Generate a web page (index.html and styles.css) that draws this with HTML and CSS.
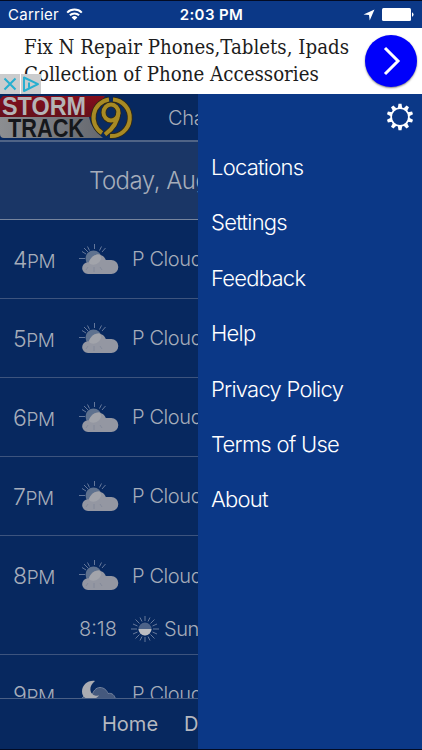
FILE: index.html
```html
<!DOCTYPE html>
<html lang="en">
<head>
  <meta charset="utf-8">
  <title>Storm Track 9</title>
  <link rel="stylesheet" href="styles.css">
</head>
<body>
  <!-- shared weather icons -->
  <svg class="symbols" aria-hidden="true">
    <symbol id="partly-cloudy" viewBox="0 0 40 31">
      <g stroke="#64779a" stroke-width="1">
        <path d="M15.500 0v5M8.500 2.500l2 4M22.500 2.500l-2 4M3 7.500l4 2.500M26.500 4l-3.500 4M0 14.500h6M5 4l4 4"/>
      </g>
      <circle cx="14.500" cy="14.500" r="8" fill="#5f728f"/>
      <path d="M9 30a5.800 5.800 0 0 1 0-11.700h1C11.500 13.500 15 10.500 19 10.500c3.800 0 6.500 2.300 7.800 5.500h5.500a7 7 0 0 1 0 14z" fill="#9497a2"/>
      <path d="M11 20a8 8 0 0 0 11-5a8 8 0 0 0-1.500-4.500C16 10 12 13 10 18z" fill="#a2a4ab"/>
      <path d="M15 23v5M9 23l-2 3M21 23l2 3" stroke="#7f8798" stroke-width=".8"/>
    </symbol>
  </svg>

  <header class="status-bar">
    <div class="carrier">
      <span>Carrier</span>
      <svg width="17" height="13" viewBox="0 0 17 13">
        <path d="M1.200 4.600a10.300 10.300 0 0 1 14.600 0M3.900 7.300a6.500 6.500 0 0 1 9.200 0" fill="none" stroke="#fff" stroke-width="2"/>
        <path d="M8.500 12.300L5.600 9.400a4.100 4.100 0 0 1 5.800 0z" fill="#fff"/>
      </svg>
    </div>
    <div class="clock">2:03 PM</div>
    <div class="indicators">
      <svg width="12" height="12" viewBox="0 0 12 12"><path d="M11.500.500L6.700 11.500L6 6L.500 5.500z" fill="#fff"/></svg>
      <svg width="33" height="13" viewBox="0 0 33 13"><rect width="29" height="13" rx="1.500" fill="#fff"/><path d="M30 4.200a2.500 2.500 0 0 1 0 4.600z" fill="#fff"/></svg>
    </div>
  </header>

  <section class="ad">
    <p class="ad-text">Fix N Repair Phones,Tablets, Ipads<br>Collection of Phone Accessories</p>
    <div class="ad-button">
      <svg width="18" height="30" viewBox="0 0 18 30"><path d="M2 2l13 13L2 28" fill="none" stroke="#fff" stroke-width="3"/></svg>
    </div>
    <div class="ad-badges">
      <svg width="20" height="20" viewBox="0 0 20 20"><path d="M4.500 4.500l11 11M15.500 4.500l-11 11" stroke="#27afd0" stroke-width="2"/></svg>
      <svg width="20" height="20" viewBox="0 0 20 20"><path d="M3 3.500v13.500L17 10.200zM8 8.500v5M8 5.500v1.500" fill="none" stroke="#27afd0" stroke-width="2" stroke-linejoin="round"/></svg>
    </div>
  </section>

  <main class="app">
    <div class="forecast">
      <div class="top-bar">
        <svg class="logo" width="133" height="46" viewBox="0 0 133 46">
          <defs>
            <linearGradient id="red" x2="0" y2="1"><stop offset="0" stop-color="#840e1c"/><stop offset="1" stop-color="#65101b"/></linearGradient>
            <linearGradient id="grey" x2="1"><stop offset="0" stop-color="#8c8e91"/><stop offset="1" stop-color="#65686f"/></linearGradient>
          </defs>
          <path d="M3 2h102l-14 21H0V5z" fill="url(#red)"/>
          <path d="M0 23h89q2 12 14 21H4q-4 0-4-4z" fill="url(#grey)"/>
          <circle cx="111" cy="23.500" r="20" fill="#0a2a60"/>
          <text x="2" y="21" class="logo-storm" textLength="84" lengthAdjust="spacingAndGlyphs">STORM</text>
          <text x="8" y="42.500" class="logo-track" textLength="76" lengthAdjust="spacingAndGlyphs">TRACK</text>
          <g fill="none" stroke="#332a12" stroke-width="5.600">
            <path d="M109 5.500a18.300 18.300 0 0 0-7 33.500"/>
            <path d="M113 5.500a18.300 18.300 0 0 1-3 36.500"/>
            <ellipse cx="111" cy="18.500" rx="7.500" ry="8"/>
            <path d="M118.500 18.500q-1 13-13.500 22"/>
          </g>
          <g fill="none" stroke="#a88a24" stroke-width="4">
            <path d="M109 5.500a18.300 18.300 0 0 0-7 33.500"/>
            <path d="M113 5.500a18.300 18.300 0 0 1-3 36.500"/>
            <ellipse cx="111" cy="18.500" rx="7.500" ry="8"/>
            <path d="M118.500 18.500q-1 13-13.500 22"/>
          </g>
        </svg>
        <span class="location">Charlotte</span>
      </div>
      <div class="day">Today, August</div>
      <div class="hours">
        <div class="hour">
          <div class="time">4<small>PM</small></div>
          <svg class="icon"><use href="#partly-cloudy"/></svg>
          <div class="sky">P Cloudy</div>
        </div>
        <div class="hour">
          <div class="time">5<small>PM</small></div>
          <svg class="icon"><use href="#partly-cloudy"/></svg>
          <div class="sky">P Cloudy</div>
        </div>
        <div class="hour">
          <div class="time">6<small>PM</small></div>
          <svg class="icon"><use href="#partly-cloudy"/></svg>
          <div class="sky">P Cloudy</div>
        </div>
        <div class="hour">
          <div class="time">7<small>PM</small></div>
          <svg class="icon"><use href="#partly-cloudy"/></svg>
          <div class="sky">P Cloudy</div>
        </div>
        <div class="hour with-event">
          <div class="time">8<small>PM</small></div>
          <svg class="icon"><use href="#partly-cloudy"/></svg>
          <div class="sky">P Cloudy</div>
        </div>
        <div class="event">
          <div class="event-time">8:18</div>
          <svg width="28" height="26" viewBox="0 0 28 26">
            <path d="M14 0v5M14 21v5M0 13h6M22 13h6M4.500 3.500l4 4M23.500 3.500l-4 4M4.500 22.500l4-4M23.500 22.500l-4-4M9 1.500l2 4M19 1.500l-2 4M9 24.500l2-4M19 24.500l-2-4M2 8l4.500 2M26 8l-4.500 2M2 18l4.500-2M26 18l-4.500-2" stroke="#66789a" stroke-width="1"/>
            <circle cx="14" cy="13" r="6.500" fill="#4c6288"/>
            <path d="M7.500 13h13a6.500 6.500 0 0 1-13 0z" fill="#bcbdc1"/>
          </svg>
          <div class="event-name">Sunset</div>
        </div>
        <div class="hour">
          <div class="time">9<small>PM</small></div>
          <svg class="icon" viewBox="0 0 40 31">
            <path d="M8 28a6 6 0 0 1-3-11l8 0C14 12 17 8.500 21 8.500c4 0 7 3 8 6c4-1 7 2 7.500 6V28z" fill="#45597e" stroke="#71809c" stroke-width="1"/>
            <path d="M16 2C9 1 3 6 3 12.500S9 21 14 20c3-.500 5-2 6-3.500C11 18 8 8 16 2z" fill="#abacb2"/>
          </svg>
          <div class="sky">P Cloudy</div>
        </div>
      </div>
      <nav class="tabs">
        <span>Home</span>
        <span>Daily</span>
      </nav>
    </div>

    <aside class="drawer">
      <svg class="gear" width="28" height="28" viewBox="0 0 28 28">
        <circle cx="14" cy="14" r="8.900" fill="none" stroke="#fff" stroke-width="1.800"/>
        <g fill="#fff">
          <path id="tooth" d="M11.800 5l.7-4.200h3l.7 4.200z"/>
          <use href="#tooth" transform="rotate(36 14 14)"/>
          <use href="#tooth" transform="rotate(72 14 14)"/>
          <use href="#tooth" transform="rotate(108 14 14)"/>
          <use href="#tooth" transform="rotate(144 14 14)"/>
          <use href="#tooth" transform="rotate(180 14 14)"/>
          <use href="#tooth" transform="rotate(216 14 14)"/>
          <use href="#tooth" transform="rotate(252 14 14)"/>
          <use href="#tooth" transform="rotate(288 14 14)"/>
          <use href="#tooth" transform="rotate(324 14 14)"/>
        </g>
      </svg>
      <ul class="menu">
        <li>Locations</li>
        <li>Settings</li>
        <li>Feedback</li>
        <li>Help</li>
        <li>Privacy Policy</li>
        <li>Terms of Use</li>
        <li>About</li>
      </ul>
    </aside>
  </main>
</body>
</html>
```

FILE: styles.css
```css
/* basic layout */
* {
  box-sizing: border-box;
}

body {
  display: flex;
  flex-direction: column;
  width: 422px;
  height: 750px;
  margin: 0;
  overflow: hidden;
  background: #0b3887;
  border-top: 1px solid #020b24;
  border-bottom: 1px solid #020b24;
  font-family: Inter, "Liberation Sans", sans-serif;
  font-weight: 300;
  color: #fff;
}

svg {
  display: block;
  flex: none;
}

.symbols {
  position: absolute;
  width: 0;
  height: 0;
}

/* status bar */
.status-bar {
  display: grid;
  grid-template-columns: 1fr auto 1fr;
  align-items: center;
  height: 27px;
  padding: 0 7px 0 8px;
  font-size: 15px;
  font-weight: 400;
  letter-spacing: .25px;
}

.carrier, .indicators {
  display: flex;
  align-items: center;
  gap: 7px;
}

.indicators {
  justify-content: flex-end;
}

.clock {
  font-weight: 600;
  letter-spacing: .4px;
}

/* ad banner */
.ad {
  position: relative;
  display: flex;
  align-items: center;
  justify-content: space-between;
  flex: none;
  height: 66px;
  padding: 0 5px 0 24px;
  background: #fff;
  color: #1c1c1c;
}

.ad-text {
  margin: 0;
  font-family: "DejaVu Serif Condensed", "DejaVu Serif", serif;
  font-size: 21px;
  font-weight: 400;
  line-height: 27px;
  white-space: nowrap;
  transform: scaleX(.965);
  transform-origin: left;
  width: 330px;
}

.ad-button {
  display: flex;
  align-items: center;
  justify-content: center;
  width: 52px;
  height: 52px;
  padding-left: 2px;
  border-radius: 50%;
  background: #0000fb;
  box-shadow: 0 1px 2px rgba(0, 0, 0, .5);
}

.ad-badges {
  position: absolute;
  left: 0;
  bottom: 0;
  display: flex;
  gap: 1px;
}

.ad-badges svg {
  background: #cbcccd;
}

/* app */
.app {
  display: flex;
  flex: 1;
  min-height: 0;
}

.forecast {
  display: flex;
  flex-direction: column;
  width: 198px;
  overflow: hidden;
  background: #07285f;
  color: #a6adba;
  white-space: nowrap;
}

.top-bar {
  display: flex;
  align-items: center;
  flex: none;
  gap: 35px;
  height: 48px;
  border-bottom: 2px solid #506486;
}

.location {
  padding-top: 2px;
  font-size: 20px;
  letter-spacing: -.3px;
}

.logo-storm, .logo-track {
  font-family: "Liberation Sans", sans-serif;
  font-weight: bold;
  font-size: 26px;
}

.logo-storm {
  fill: #b4b4b6;
}

.logo-track {
  fill: #15171b;
}

.day {
  flex: none;
  height: 78px;
  padding-left: 89px;
  background: #1a3666;
  border-bottom: 1px solid #76849d;
  font-size: 24px;
  line-height: 78px;
  letter-spacing: -.5px;
}

/* hourly rows */
.hours {
  flex: 1;
  overflow: hidden;
}

.hour {
  display: grid;
  grid-template-columns: 66px 40px 1fr;
  align-items: center;
  height: 79px;
  padding-left: 13px;
  border-bottom: 1px solid #3d547e;
}

.hour.with-event {
  border-bottom: none;
}

.time {
  padding-top: 1px;
  font-size: 23px;
  letter-spacing: -.4px;
}

.time small {
  font-size: 19px;
}

.icon {
  width: 40px;
  height: 31px;
}

.sky {
  padding-left: 13px;
  font-size: 20px;
  letter-spacing: -.4px;
}

.event {
  display: flex;
  align-items: center;
  height: 40px;
  padding: 0 0 11px 79px;
  border-bottom: 1px solid #3d547e;
  font-size: 20px;
}

.event-time {
  flex: none;
  width: 52px;
}

.event-name {
  padding-left: 5px;
  letter-spacing: -.5px;
}

.tabs {
  display: flex;
  align-items: center;
  flex: none;
  gap: 26px;
  height: 51px;
  padding-left: 102px;
  border-top: 1px solid #4a5f85;
  font-size: 20px;
  font-weight: 400;
  color: #b5b8bf;
}

/* menu drawer */
.drawer {
  flex: 1;
  padding: 9px 8px 0 13px;
  background: #0b3887;
}

.gear {
  margin-left: auto;
}

.menu {
  margin: 9px 0 0;
  padding: 0;
  list-style: none;
  font-size: 22px;
  letter-spacing: -.75px;
}

.menu li {
  height: 55.4px;
  line-height: 55.4px;
}
```
